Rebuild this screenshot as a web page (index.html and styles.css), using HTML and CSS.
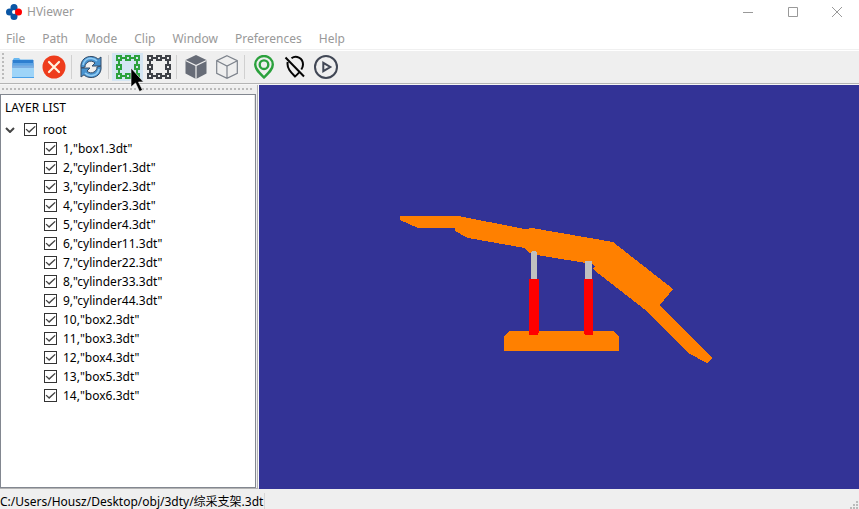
FILE: index.html
```html
<!DOCTYPE html>
<html lang="en">
<head>
<meta charset="utf-8">
<title>HViewer</title>
<link rel="stylesheet" href="styles.css">
</head>
<body>
<header class="titlebar">
  <svg class="logo" viewBox="0 0 16 16" aria-hidden="true"><circle cx="8" cy="3.5" r="3.5" fill="#0a56a5"/><circle cx="3.5" cy="8" r="3.5" fill="#0a56a5"/><circle cx="8" cy="12.5" r="3.5" fill="#0a56a5"/><path d="M4.500 4.500h7v7h-7z" fill="#0a56a5"/><circle cx="8" cy="8" r="2" fill="#fff"/><circle cx="12.500" cy="8" r="3.500" fill="#f00"/></svg>
  <span class="title">HViewer</span>
  <div class="window-buttons">
    <button aria-label="Minimize"><svg viewBox="0 0 10 10"><path d="M0 5.500h10"/></svg></button>
    <button aria-label="Maximize"><svg viewBox="0 0 10 10"><path d="M.5.5h9v9h-9z"/></svg></button>
    <button aria-label="Close"><svg viewBox="0 0 10 10"><path d="M0 0l10 10M10 0L0 10"/></svg></button>
  </div>
</header>
<nav class="menubar">
  <button>File</button><button>Path</button><button>Mode</button><button>Clip</button><button>Window</button><button>Preferences</button><button>Help</button>
</nav>
<div class="toolbar" role="toolbar">
  <span class="grip"></span>
  <button aria-label="Open"><svg viewBox="0 0 24 24"><path d="M2 4.500l1-1.500h5l1.500 1.500H22V9H2z" fill="#6bb8f0"/><path d="M1.500 5h21v16h-21z" fill="#2e7fd0"/><path d="M1.500 8h21v4h-21z" fill="#5da3e4"/><path d="M1.500 10.500h21v3h-21z" fill="#7baee2"/><path d="M1 13h22v9.500H1z" fill="#9ed4f8"/><path d="M1 22.500h22" stroke="#4aa0e8"/></svg></button>
  <button aria-label="Remove"><svg viewBox="0 0 24 24"><circle cx="12" cy="12" r="11.500" fill="#ee3c1c"/><path d="M7 7l10 10M17 7L7 17" stroke="#fff3e0" stroke-width="2.200" stroke-linecap="round"/></svg></button>
  <span class="separator"></span>
  <button aria-label="Refresh"><svg viewBox="0 0 24 24"><path d="M2 13C1 5 7 .8 13 1.500c3 .3 5 1.500 6 2.700L22 2v9h-9l3-3c-2-2-5-2.500-7-1-2 1-3 3-3 5z" fill="#4792cf" stroke="#344c68"/><path d="M4 10c1-5 5-7 9-6.500 2.500.2 4 1.500 5 2.500" fill="none" stroke="#91ccf4" stroke-width="1.700"/><g transform="rotate(180 12 12)"><path d="M2 13C1 5 7 .8 13 1.500c3 .3 5 1.500 6 2.700L22 2v9h-9l3-3c-2-2-5-2.500-7-1-2 1-3 3-3 5z" fill="#4792cf" stroke="#344c68"/><path d="M4 10c1-5 5-7 9-6.500 2.500.2 4 1.500 5 2.500" fill="none" stroke="#91ccf4" stroke-width="1.700"/></g></svg></button>
  <span class="separator"></span>
  <button class="active" aria-label="Select box">
    <svg class="frame green" viewBox="0 0 24 24"><path d="M1 1h4v4H1zM10 1h4v4h-4zM19 1h4v4h-4zM1 10h4v4H1zM19 10h4v4h-4zM1 19h4v4H1zM10 19h4v4h-4zM19 19h4v4h-4zM5 3h5M14 3h5M5 21h5M14 21h5M3 5v5M3 14v5M21 5v5M21 14v5"/></svg>
    <svg class="cursor" viewBox="0 0 14 25" aria-hidden="true"><path d="M1 1v19l4.500-4 4 8.500 3-1.500-4-8h5z" fill="#000" stroke="#fff" stroke-width=".6"/></svg>
  </button>
  <button aria-label="Edit box"><svg class="frame" viewBox="0 0 24 24"><path d="M1 1h4v4H1zM10 1h4v4h-4zM19 1h4v4h-4zM1 10h4v4H1zM19 10h4v4h-4zM1 19h4v4H1zM10 19h4v4h-4zM19 19h4v4h-4zM5 3h5M14 3h5M5 21h5M14 21h5M3 5v5M3 14v5M21 5v5M21 14v5"/></svg></button>
  <span class="separator"></span>
  <button aria-label="Solid"><svg viewBox="0 0 24 24"><path d="M12 0l10.500 5v13.500L12 24 1.500 18.500V5z" fill="#676c77"/><path d="M1.500 5.500L12 10.500l10.500-5M12 10.500V24" fill="none" stroke="#efefef" stroke-width="1.200"/></svg></button>
  <button aria-label="Wireframe"><svg viewBox="0 0 24 24"><path d="M12 .7l10.300 5v12.600L12 23.300 1.700 18.300V5.700zM1.700 5.700L12 11l10.300-5.300M12 11v12" fill="none" stroke="#7c828b" stroke-width="1.200"/></svg></button>
  <span class="separator"></span>
  <button aria-label="Show marker"><svg viewBox="0 0 24 24"><g fill="none" stroke="#2ba13d" stroke-width="2.400"><path d="M12 22.500C7 17.500 3.200 14 3.200 9.500a8.800 8.500 0 0 1 17.600 0c0 4.500-3.800 8-8.800 13z"/><circle cx="12" cy="9.700" r="4.300"/></g></svg></button>
  <button aria-label="Hide marker"><svg viewBox="0 0 24 24"><path d="M8.500 3.300C13-.2 20 3 20 9.500c0 2-.6 3.500-1.700 5M4.700 7C3.500 13 8 17.500 12 21.500c1.500-1.200 2.800-2.500 4-4M2.500 2.500l18.500 19" fill="none" stroke="#050505" stroke-width="2"/></svg></button>
  <button aria-label="Play"><svg viewBox="0 0 24 24"><g fill="none" stroke="#414755" stroke-width="2"><circle cx="12" cy="12" r="11"/><path d="M9.300 7.800v8.400l7-4.200z"/></g></svg></button>
</div>
<main class="workspace">
  <aside class="dock">
    <div class="dock-grip"></div>
    <section class="tree">
      <h1>LAYER LIST</h1>
      <div class="row root"><svg class="chevron" viewBox="0 0 10 6" aria-hidden="true"><path d="M1 1l4 4 4-4"/></svg><label><input type="checkbox" checked>root</label></div>
      <ul>
        <li class="row"><label><input type="checkbox" checked>1,"box1.3dt"</label></li>
        <li class="row"><label><input type="checkbox" checked>2,"cylinder1.3dt"</label></li>
        <li class="row"><label><input type="checkbox" checked>3,"cylinder2.3dt"</label></li>
        <li class="row"><label><input type="checkbox" checked>4,"cylinder3.3dt"</label></li>
        <li class="row"><label><input type="checkbox" checked>5,"cylinder4.3dt"</label></li>
        <li class="row"><label><input type="checkbox" checked>6,"cylinder11.3dt"</label></li>
        <li class="row"><label><input type="checkbox" checked>7,"cylinder22.3dt"</label></li>
        <li class="row"><label><input type="checkbox" checked>8,"cylinder33.3dt"</label></li>
        <li class="row"><label><input type="checkbox" checked>9,"cylinder44.3dt"</label></li>
        <li class="row"><label><input type="checkbox" checked>10,"box2.3dt"</label></li>
        <li class="row"><label><input type="checkbox" checked>11,"box3.3dt"</label></li>
        <li class="row"><label><input type="checkbox" checked>12,"box4.3dt"</label></li>
        <li class="row"><label><input type="checkbox" checked>13,"box5.3dt"</label></li>
        <li class="row"><label><input type="checkbox" checked>14,"box6.3dt"</label></li>
      </ul>
    </section>
  </aside>
  <div class="viewport">
    <svg viewBox="259 85 600 404" shape-rendering="crispEdges" role="img" aria-label="Model">
      <path fill="#ff8000" d="M400 216H458L525 229L532 228L613 242L673 289L660 305L712 358L707 363L688 353L644 309L594 270L593 268L595 266L592 264L537 255L529 253L525 248L468 238L455 231V228H418L400 220z"/>
      <path fill="#ff8000" d="M504 336L509 331H613L619 336V351H504z"/>
      <path fill="#c0c0c0" d="M531 280V252L532 251H535L537 253V280zM585 280V261H592V280z"/>
      <path fill="#f00" d="M529 279H539V332L538 335H529zM584 279H593V335H585L584 332z"/>
    </svg>
  </div>
</main>
<footer class="statusbar"><span>C:/Users/Housz/Desktop/obj/3dty/综采支架.3dt</span>
  <svg class="sizegrip" viewBox="0 0 8 8" aria-hidden="true"><path d="M6 0h2v2H6zM3 3h2v2H3zM6 3h2v2H6zM0 6h2v2H0zM3 6h2v2H3zM6 6h2v2H6z"/></svg>
</footer>
</body>
</html>
```
FILE: styles.css
```css
* { box-sizing: border-box; }

body {
  margin: 0;
  height: 100vh;
  display: flex;
  flex-direction: column;
  overflow: hidden;
  background: #efefef;
  color: #000;
  font: 12px/18px "Noto Sans", "Noto Sans CJK SC", sans-serif;
}

button {
  border: 0;
  padding: 0;
  background: none;
  color: inherit;
  font: inherit;
}

svg { display: block; }

.titlebar {
  height: 24px;
  flex: none;
  display: flex;
  align-items: center;
  padding-left: 6px;
  background: #fff;
  color: #999;
}

.logo { width: 16px; height: 16px; margin-right: 5px; }
.title { flex: 1; }
.window-buttons { display: flex; }

.window-buttons button {
  width: 45px;
  height: 22px;
  display: grid;
  place-items: center;
}

.window-buttons button:last-child { width: 44px; }

.window-buttons svg {
  width: 10px;
  height: 10px;
  fill: none;
  stroke: #999;
}

.menubar {
  height: 26px;
  flex: none;
  display: flex;
  align-items: center;
  gap: 17px;
  padding: 5px 6px 1px;
  background: #fff;
  border-bottom: 1px solid #f0f0f0;
  color: #999;
}

.toolbar {
  height: 34px;
  flex: none;
  display: flex;
  align-items: center;
  border-top: 1px solid #fff;
  border-bottom: 1px solid #b4b4b4;
}

.toolbar button {
  position: relative;
  width: 31px;
  height: 28px;
  display: grid;
  place-items: center;
}

.toolbar button > svg:first-child { width: 24px; height: 24px; }
.toolbar .active { background: #d4e5f3; }

.grip {
  width: 2px;
  height: 28px;
  margin: 0 3px 0 2px;
  background: repeating-linear-gradient(#bbb 0 2px, #efefef 2px 4px);
}

.separator {
  width: 6px;
  height: 24px;
  background: linear-gradient(90deg, transparent 2px, #d0d0d0 2px 3px, transparent 3px);
}

.frame { fill: none; stroke: #3e4147; stroke-width: 2; }
.frame.green { stroke: #2ba13d; }

.toolbar .cursor {
  position: absolute;
  z-index: 1;
  left: 18px;
  top: 14px;
  width: 14px;
  height: 25px;
}

.workspace {
  flex: 1;
  min-height: 0;
  display: flex;
  border-top: 1px solid #f6f6f6;
}

.dock {
  width: 259px;
  flex: none;
  display: flex;
  flex-direction: column;
  padding-right: 1px;
  border-right: 1px solid #fafafa;
  border-bottom: 1px solid #b4b4b4;
  box-shadow: inset -1px 0 #b4b4b4;
}

.dock-grip {
  height: 2px;
  margin: 3px 3px 4px 2px;
  background: repeating-linear-gradient(90deg, #bbb 0 2px, #efefef 2px 4px);
}

.tree {
  flex: 1;
  margin-right: 1px;
  border: 1px solid #828790;
  background: #fff;
}

.tree h1 {
  margin: 0;
  padding: 4px;
  border-right: 1px solid #e5e5e5;
  font-size: 12px;
  font-weight: 400;
  line-height: 17px;
}

.tree ul { margin: 0; padding: 0 0 0 43px; list-style: none; }

.row {
  height: 19px;
  display: flex;
  align-items: center;
}

.row label { display: flex; align-items: center; gap: 6px; }
.root { padding-left: 4px; }

.chevron {
  width: 10px;
  height: 6px;
  margin-right: 9px;
  fill: none;
  stroke: #444;
  stroke-width: 2;
}

.row input {
  appearance: none;
  width: 13px;
  height: 13px;
  margin: 0;
  display: grid;
  place-items: center;
  border: 1px solid #333;
  background: #fff;
}

.row input:checked::before {
  content: "";
  width: 11px;
  height: 7px;
  background: #444;
  clip-path: polygon(5% 50%, 14% 38%, 37% 72%, 88% 0, 97% 10%, 38% 100%);
}

.viewport {
  flex: 1;
  min-width: 0;
  background: #333396;
}

.viewport svg { width: 100%; height: 100%; }

.statusbar {
  height: 20px;
  flex: none;
  display: flex;
  align-items: center;
  justify-content: space-between;
  padding-top: 5px;
}

.statusbar span {
  padding-right: 1px;
  border-right: 1px solid #d7d7d7;
  white-space: nowrap;
}

.sizegrip {
  align-self: flex-end;
  width: 8px;
  height: 8px;
  margin-right: 1px;
  fill: #bbb;
}
```
